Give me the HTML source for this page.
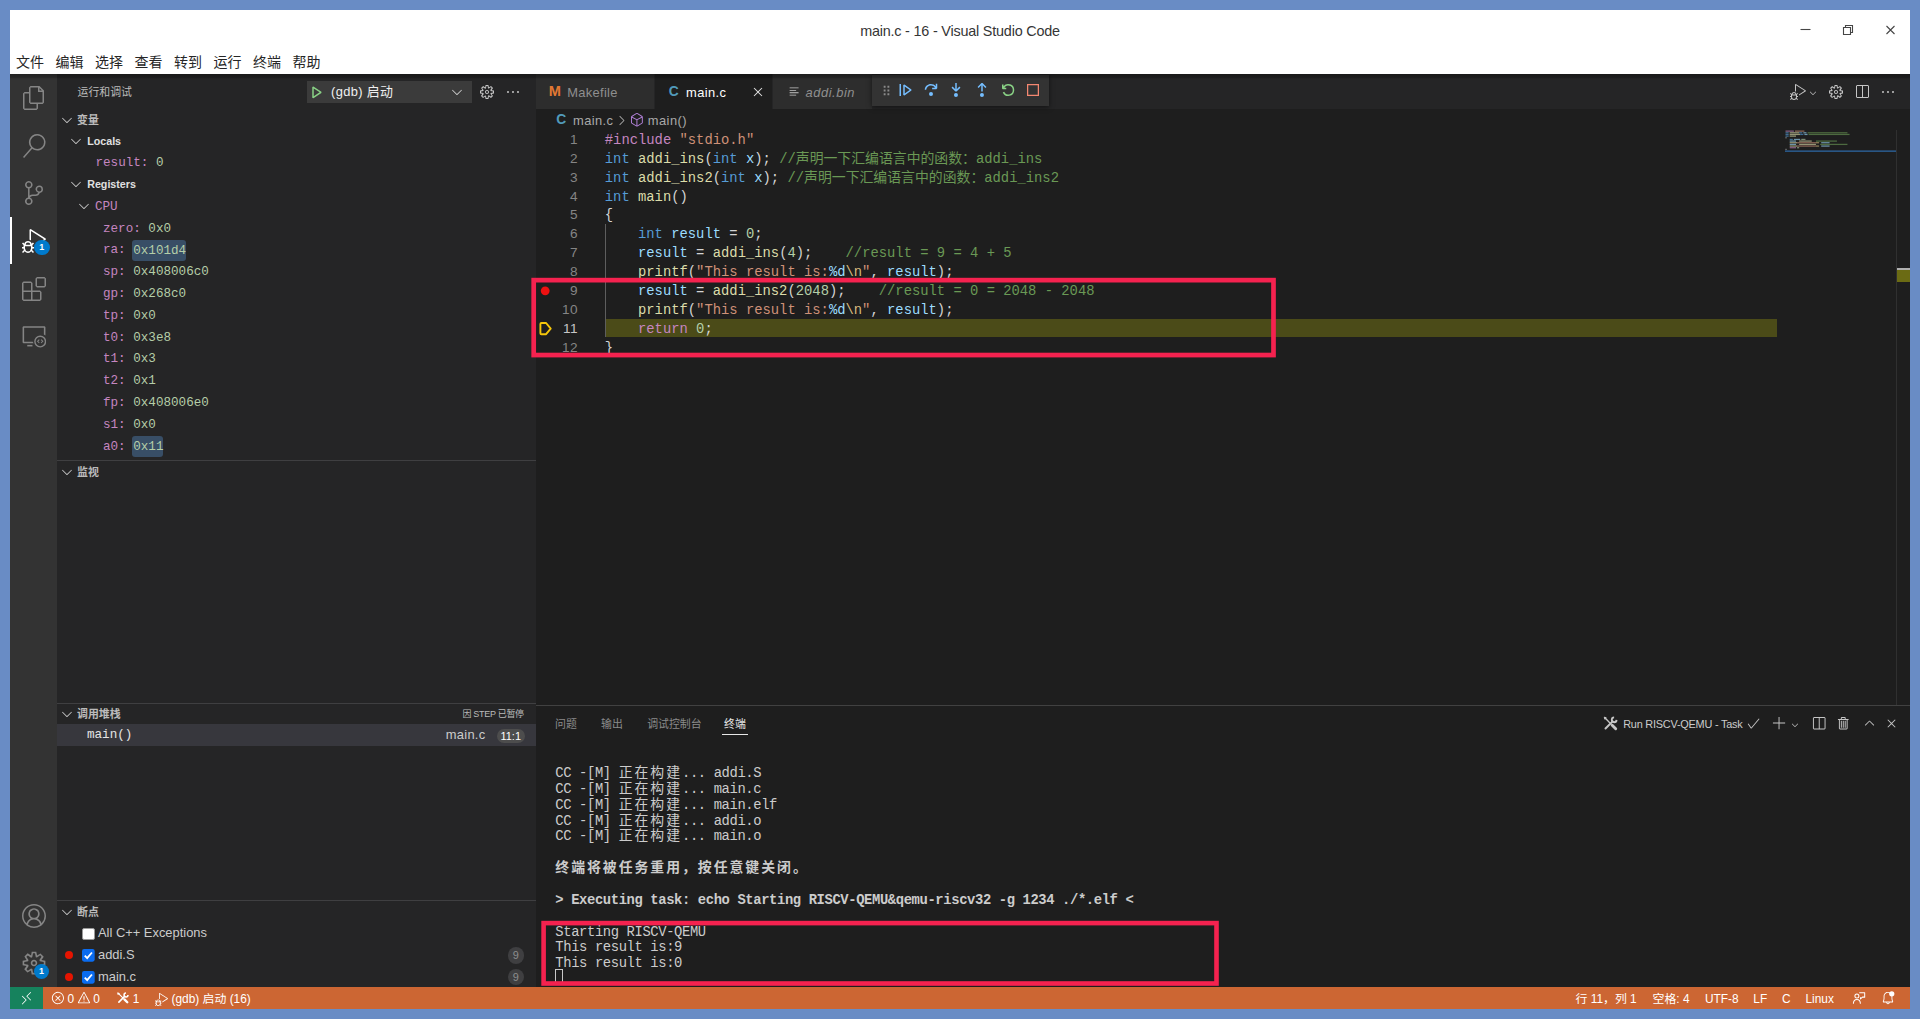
<!DOCTYPE html>
<html lang="zh-CN"><head><meta charset="utf-8"><title>main.c - 16 - Visual Studio Code</title>
<style>
*{box-sizing:border-box;margin:0;padding:0}
html,body{width:1920px;height:1019px;overflow:hidden}
body{background:#698cc5;position:relative;font-family:"Liberation Sans","Noto Sans CJK SC",sans-serif;-webkit-font-smoothing:antialiased}
.b{position:absolute}
.t{position:absolute;white-space:pre;height:24px;line-height:24px}
.u{font-family:"Liberation Sans","Noto Sans CJK SC",sans-serif}
.m{font-family:"Liberation Mono","Noto Sans CJK SC",monospace}
.c{font-family:"Liberation Mono","Noto Sans CJK SC",monospace}
.ic{position:absolute;display:block}
.bold{font-weight:bold}
.k{color:#569cd6}.f{color:#dcdcaa}.v{color:#9cdcfe}.p{color:#d4d4d4}.s{color:#ce9178}.cm{color:#6a9955}.n{color:#b5cea8}.r{color:#c586c0}.e{color:#d7ba7d}
.cj{font-family:"Liberation Mono","Noto Sans CJK SC",monospace;line-height:0}
.c .cj{font-size:13.86px;letter-spacing:0}.tm{letter-spacing:-0.38px}.c .cj.tc{letter-spacing:1.98px;font-size:13.86px}
</style></head><body>

<div class="b" style="left:10px;top:10px;width:1900.00px;height:999.00px;background:#ffffff;"></div>
<div class="t u" style="left:660px;width:600px;text-align:center;top:18.5px;font-size:14.4px;letter-spacing:-.2px;color:#353535" id="title">main.c - 16 - Visual Studio Code</div>
<svg class="ic" style="left:1795px;top:20px;width:110px;height:20px" viewBox="0 0 110 20" fill="none" stroke="#454545" stroke-width="1.1"><path d="M5.500 9.500h10"/><path d="M48.500 7.500h7v7h-7zM50.500 7.500v-2h7v7h-2"/><path d="M91.500 6l8 8M99.500 6l-8 8"/></svg>
<div class="t u" style="left:15.9px;top:50.20px;font-size:14px;color:#262626;">文件</div>
<div class="t u" style="left:55.4px;top:50.20px;font-size:14px;color:#262626;">编辑</div>
<div class="t u" style="left:94.9px;top:50.20px;font-size:14px;color:#262626;">选择</div>
<div class="t u" style="left:134.4px;top:50.20px;font-size:14px;color:#262626;">查看</div>
<div class="t u" style="left:173.9px;top:50.20px;font-size:14px;color:#262626;">转到</div>
<div class="t u" style="left:213.4px;top:50.20px;font-size:14px;color:#262626;">运行</div>
<div class="t u" style="left:252.9px;top:50.20px;font-size:14px;color:#262626;">终端</div>
<div class="t u" style="left:292.4px;top:50.20px;font-size:14px;color:#262626;">帮助</div>
<div class="b" style="left:10px;top:74px;width:47.30px;height:913.00px;background:#333333;"></div>
<div class="b" style="left:57.3px;top:74px;width:478.70px;height:913.00px;background:#252526;"></div>
<div class="b" style="left:536px;top:74px;width:1374.00px;height:913.00px;background:#1e1e1e;"></div>
<div class="b" style="left:10px;top:987px;width:1900.00px;height:22.00px;background:#cc6633;"></div>
<div class="b" style="left:10px;top:987px;width:33.30px;height:22.00px;background:#16825d;"></div>
<svg class="ic" style="left:21.90px;top:85.50px;width:24px;height:24px;color:#858585;" viewBox="0 0 24 24" fill="currentColor"><path d="M17.5 0h-9L7 1.5V6H2.5L1 7.5v15.07L2.5 24h12.07L16 22.57V18h4.7l1.3-1.43V4.5L17.5 0zm0 2.12l2.38 2.38H17.5V2.12zm-3 20.38h-12v-15H7v9.07L8.5 18h6v4.5zm6-6h-12v-15H16V6h4.5v10.5z"/></svg>
<svg class="ic" style="left:21.50px;top:133.50px;width:24px;height:24px;color:#858585;" viewBox="0 0 24 24" fill="currentColor"><path d="M15.25 0a8.25 8.25 0 0 0-6.18 13.72L1 22.88l1.12 1 8.05-9.12A8.251 8.251 0 1 0 15.25.01V0zm0 15a6.75 6.75 0 1 1 0-13.5 6.75 6.75 0 0 1 0 13.5z"/></svg>
<svg class="ic" style="left:21.50px;top:180.50px;width:24px;height:24px;color:#858585;" viewBox="0 0 24 24" fill="currentColor"><path d="M21.007 8.222A3.738 3.738 0 0 0 15.045 5.2a3.737 3.737 0 0 0 1.156 6.583 2.988 2.988 0 0 1-2.668 1.67h-2.99a4.456 4.456 0 0 0-2.989 1.165V7.4a3.737 3.737 0 1 0-1.494 0v9.117a3.776 3.776 0 1 0 1.816.099 2.99 2.99 0 0 1 2.668-1.667h2.99a4.484 4.484 0 0 0 4.223-3.039 3.736 3.736 0 0 0 3.25-3.687zM4.565 3.738a2.242 2.242 0 1 1 4.484 0 2.242 2.242 0 0 1-4.484 0zm4.484 16.441a2.242 2.242 0 1 1-4.484 0 2.242 2.242 0 0 1 4.484 0zm8.221-9.715a2.242 2.242 0 1 1 0-4.485 2.242 2.242 0 0 1 0 4.485z"/></svg>
<div class="b" style="left:10px;top:216.5px;width:2.00px;height:47.50px;background:#ffffff;"></div>
<svg class="ic" style="left:21.50px;top:228.50px;width:24px;height:24px;color:#ffffff;" viewBox="0 0 24 24" fill="currentColor"><path d="M10.94 13.5l-1.32 1.32a3.73 3.73 0 0 0-7.24 0L1.06 13.5 0 14.56l1.72 1.72-.22.22V18H0v1.5h1.5v.08c.077.489.214.966.41 1.42L0 22.94 1.06 24l1.65-1.65A4.308 4.308 0 0 0 6 24a4.31 4.31 0 0 0 3.29-1.65L10.94 24 12 22.94 10.09 21c.198-.464.336-.951.41-1.45v-.1H12V18h-1.5v-1.5l-.22-.22L12 14.56l-1.06-1.06zM6 13.5a2.25 2.25 0 0 1 2.25 2.25h-4.5A2.25 2.25 0 0 1 6 13.5zm3 6a3.33 3.33 0 0 1-3 3 3.33 3.33 0 0 1-3-3v-2.25h6v2.25zm14.76-9.9v1.26L13.5 17.37V15.6l8.5-5.37L9 2v9.46a5.07 5.07 0 0 0-1.5-.72V.63L8.64 0l15.12 9.6z"/></svg>
<svg class="ic" style="left:21.50px;top:276.50px;width:24px;height:24px;color:#858585;" viewBox="0 0 24 24" fill="currentColor"><path d="M13.5 1.5L15 0h7.5L24 1.5V9l-1.5 1.5H15L13.5 9V1.5zm1.5 0V9h7.5V1.5H15zM0 15V6l1.5-1.5H9L10.5 6v7.5H18l1.5 1.5v7.5L18 24H1.5L0 22.5V15zm9-1.5V6H1.5v7.5H9zM9 15H1.5v7.5H9V15zm1.5 7.5H18V15h-7.5v7.5z"/></svg>
<svg class="ic" style="left:21.50px;top:323.80px;width:24px;height:24px;color:#858585;" viewBox="0 0 24 24" fill="currentColor"><path d="M1.344 2.125h21.312l.782.781v8.599a7.825 7.825 0 0 0-1.563-.912V3.688H2.125V17.75h8.599a7.8 7.8 0 0 0 .912 1.563H1.344l-.781-.782V2.906l.78-.781z"/><path d="M5.25 20.875h5.2v1.563H5.25z"/><path fill-rule="evenodd" d="M18.2 11.6a6 6 0 1 0 0 12 6 6 0 0 0 0-12zm-4.6 6a4.6 4.6 0 1 1 9.2 0 4.6 4.6 0 0 1-9.2 0z"/><path d="M17.3 15.2l.7.7-1.4 1.4 1.4 1.4-.7.7-2.1-2.1zM19.1 15.9l.7-.7 2.1 2.1-2.1 2.1-.7-.7 1.4-1.4z" transform="translate(0 .3) scale(.98)"/></svg>
<svg class="ic" style="left:21.50px;top:904.00px;width:24px;height:24px;color:#858585;" viewBox="0 0 16 16" fill="currentColor"><path d="M16 7.992C16 3.58 12.416 0 8 0S0 3.58 0 7.992c0 2.43 1.104 4.62 2.832 6.09.016.016.032.016.032.032.144.112.288.224.448.336.08.048.144.111.224.175A7.98 7.98 0 0 0 8.016 16a7.98 7.98 0 0 0 4.48-1.375c.08-.048.144-.111.224-.16.144-.111.304-.223.448-.335.016-.016.032-.016.032-.032 1.696-1.487 2.8-3.676 2.8-6.106zm-8 7.001c-1.504 0-2.88-.48-4.016-1.279.016-.128.048-.255.08-.383a4.17 4.17 0 0 1 .416-.991c.176-.304.384-.576.64-.816.24-.24.528-.463.816-.639.304-.176.624-.304.976-.4A4.15 4.15 0 0 1 8 10.342a4.185 4.185 0 0 1 2.928 1.166c.368.368.656.8.864 1.295.112.288.192.592.24.911A7.03 7.03 0 0 1 8 14.993zm-2.448-7.4a2.49 2.49 0 0 1-.208-1.024c0-.351.064-.703.208-1.023.144-.32.336-.607.576-.847.24-.24.528-.431.848-.575.32-.144.672-.208 1.024-.208.368 0 .704.064 1.024.208.32.144.608.336.848.575.24.24.432.528.576.847.144.32.208.672.208 1.023 0 .368-.064.704-.208 1.023a2.84 2.84 0 0 1-.576.848 2.84 2.84 0 0 1-.848.575 2.715 2.715 0 0 1-2.064 0 2.84 2.84 0 0 1-.848-.575 2.526 2.526 0 0 1-.56-.848zm7.424 5.306c0-.032-.016-.048-.016-.08a5.22 5.22 0 0 0-.688-1.406 4.883 4.883 0 0 0-1.088-1.135 5.207 5.207 0 0 0-1.04-.608 2.82 2.82 0 0 0 .464-.383 4.2 4.2 0 0 0 .624-.784 3.624 3.624 0 0 0 .528-1.934 3.71 3.71 0 0 0-.288-1.47 3.799 3.799 0 0 0-.816-1.199 3.845 3.845 0 0 0-1.2-.8 3.72 3.72 0 0 0-1.472-.287 3.72 3.72 0 0 0-1.472.288 3.631 3.631 0 0 0-1.2.815 3.84 3.84 0 0 0-.8 1.199 3.71 3.71 0 0 0-.288 1.47c0 .352.048.688.144 1.007.096.336.224.64.4.927.16.288.384.544.624.784.144.144.304.271.48.383a5.12 5.12 0 0 0-1.04.624c-.416.32-.784.703-1.088 1.119a4.999 4.999 0 0 0-.688 1.406c-.016.032-.016.064-.016.08C1.776 11.636.992 9.91.992 7.992.992 4.14 4.144.991 8 .991s7.008 3.149 7.008 7.001a6.96 6.96 0 0 1-2.032 4.907z"/></svg>
<svg class="ic" style="left:20.50px;top:950.00px;width:26px;height:26px;color:#858585;" viewBox="0 0 16 16" fill="currentColor"><path d="M9.1 4.4L8.6 2H7.4l-.5 2.4-.7.3-2-1.3-.9.8 1.3 2-.2.7-2.4.5v1.2l2.4.5.3.8-1.3 2 .8.8 2-1.3.8.3.4 2.3h1.2l.5-2.4.8-.3 2 1.3.8-.8-1.3-2 .3-.8 2.3-.4V7.4l-2.4-.5-.3-.8 1.3-2-.8-.8-2 1.3-.7-.2zM9.4 1l.5 2.4L12 2.1l2 2-1.4 2.1 2.4.4v2.8l-2.4.5L14 12l-2 2-2.1-1.4-.5 2.4H6.6l-.5-2.4L4 13.9l-2-2 1.4-2.1L1 9.4V6.6l2.4-.5L2.1 4l2-2 2.1 1.4.4-2.4h2.8zm.6 7c0 1.1-.9 2-2 2s-2-.9-2-2 .9-2 2-2 2 .9 2 2zM8 9c.6 0 1-.4 1-1s-.4-1-1-1-1 .4-1 1 .4 1 1 1z"/></svg>
<div class="b u bold" style="left:34.05px;top:239.85px;width:15.5px;height:15.5px;border-radius:50%;background:#007acc;color:#fff;font-size:9px;line-height:15.5px;text-align:center">1</div>
<div class="b u bold" style="left:33.75px;top:963.85px;width:15.5px;height:15.5px;border-radius:50%;background:#007acc;color:#fff;font-size:9px;line-height:15.5px;text-align:center">1</div>
<div class="t u" style="left:77.5px;top:80.00px;font-size:10.9px;color:#bbbbbb;">运行和调试</div>
<div class="b" style="left:307px;top:81px;width:165.20px;height:21.60px;background:#3b3b3b;"></div>
<svg class="ic" style="left:308.20px;top:84.40px;width:16px;height:16px;color:#89d185;" viewBox="0 0 16 16" fill="currentColor"><path d="M4.25 3l1.166-.624 8 5.333v1.248l-8 5.334-1.166-.624V3zm1.5 1.401v7.864l5.898-3.932L5.75 4.401z"/></svg>
<div class="t u" style="left:331px;top:80.40px;font-size:12.9px;color:#f0f0f0;letter-spacing:.35px">(gdb) 启动</div>
<svg class="ic" style="left:449.20px;top:84.30px;width:16px;height:16px;color:#cccccc;" viewBox="0 0 16 16" fill="currentColor"><path d="M7.976 10.072l4.357-4.357.62.618L8.284 11h-.618L3 6.333l.619-.618 4.357 4.357z"/></svg>
<svg class="ic" style="left:479.00px;top:84.00px;width:16px;height:16px;color:#c5c5c5;" viewBox="0 0 16 16" fill="currentColor"><path d="M9.1 4.4L8.6 2H7.4l-.5 2.4-.7.3-2-1.3-.9.8 1.3 2-.2.7-2.4.5v1.2l2.4.5.3.8-1.3 2 .8.8 2-1.3.8.3.4 2.3h1.2l.5-2.4.8-.3 2 1.3.8-.8-1.3-2 .3-.8 2.3-.4V7.4l-2.4-.5-.3-.8 1.3-2-.8-.8-2 1.3-.7-.2zM9.4 1l.5 2.4L12 2.1l2 2-1.4 2.1 2.4.4v2.8l-2.4.5L14 12l-2 2-2.1-1.4-.5 2.4H6.6l-.5-2.4L4 13.9l-2-2 1.4-2.1L1 9.4V6.6l2.4-.5L2.1 4l2-2 2.1 1.4.4-2.4h2.8zm.6 7c0 1.1-.9 2-2 2s-2-.9-2-2 .9-2 2-2 2 .9 2 2zM8 9c.6 0 1-.4 1-1s-.4-1-1-1-1 .4-1 1 .4 1 1 1z"/></svg>
<svg class="ic" style="left:504.60px;top:84.00px;width:16px;height:16px;color:#c5c5c5;" viewBox="0 0 16 16" fill="currentColor"><path d="M4 8a1 1 0 1 1-2 0 1 1 0 0 1 2 0zm5 0a1 1 0 1 1-2 0 1 1 0 0 1 2 0zm5 0a1 1 0 1 1-2 0 1 1 0 0 1 2 0z"/></svg>
<svg class="ic" style="left:59.00px;top:111.50px;width:16px;height:16px;color:#c5c5c5;" viewBox="0 0 16 16" fill="currentColor"><path d="M7.976 10.072l4.357-4.357.62.618L8.284 11h-.618L3 6.333l.619-.618 4.357 4.357z"/></svg>
<div class="t u bold" style="left:77px;top:107.50px;font-size:10.9px;color:#bbbbbb;">变量</div>
<svg class="ic" style="left:68.00px;top:132.50px;width:16px;height:16px;color:#c5c5c5;" viewBox="0 0 16 16" fill="currentColor"><path d="M7.976 10.072l4.357-4.357.62.618L8.284 11h-.618L3 6.333l.619-.618 4.357 4.357z"/></svg>
<div class="t u bold" style="left:87.2px;top:128.80px;font-size:10.7px;color:#e0e0e0;">Locals</div>
<div class="t m" style="left:95.5px;top:151.20px;font-size:12.6px;color:#ccc;"><span style="color:#c586c0">result:</span> <span style="color:#b5cea8">0</span></div>
<svg class="ic" style="left:68.00px;top:176.10px;width:16px;height:16px;color:#c5c5c5;" viewBox="0 0 16 16" fill="currentColor"><path d="M7.976 10.072l4.357-4.357.62.618L8.284 11h-.618L3 6.333l.619-.618 4.357 4.357z"/></svg>
<div class="t u bold" style="left:87.2px;top:172.40px;font-size:10.7px;color:#e0e0e0;">Registers</div>
<svg class="ic" style="left:75.50px;top:197.90px;width:16px;height:16px;color:#c5c5c5;" viewBox="0 0 16 16" fill="currentColor"><path d="M7.976 10.072l4.357-4.357.62.618L8.284 11h-.618L3 6.333l.619-.618 4.357 4.357z"/></svg>
<div class="t m" style="left:95px;top:194.90px;font-size:12.6px;color:#c586c0;">CPU</div>
<div class="t m" style="left:103px;top:216.60px;font-size:12.6px;color:#ccc;"><span style="color:#c586c0">zero:</span> <span style="color:#b5cea8">0x0</span></div>
<div class="t m" style="left:103px;top:238.40px;font-size:12.6px;color:#ccc;"><span style="color:#c586c0">ra:</span> <span style="color:#b5cea8;background:#384e66;border-radius:3px;padding:3.5px 0 3.5px 1.5px;margin-left:-1.5px;">0x101d4</span></div>
<div class="t m" style="left:103px;top:260.20px;font-size:12.6px;color:#ccc;"><span style="color:#c586c0">sp:</span> <span style="color:#b5cea8">0x408006c0</span></div>
<div class="t m" style="left:103px;top:282.00px;font-size:12.6px;color:#ccc;"><span style="color:#c586c0">gp:</span> <span style="color:#b5cea8">0x268c0</span></div>
<div class="t m" style="left:103px;top:303.80px;font-size:12.6px;color:#ccc;"><span style="color:#c586c0">tp:</span> <span style="color:#b5cea8">0x0</span></div>
<div class="t m" style="left:103px;top:325.60px;font-size:12.6px;color:#ccc;"><span style="color:#c586c0">t0:</span> <span style="color:#b5cea8">0x3e8</span></div>
<div class="t m" style="left:103px;top:347.40px;font-size:12.6px;color:#ccc;"><span style="color:#c586c0">t1:</span> <span style="color:#b5cea8">0x3</span></div>
<div class="t m" style="left:103px;top:369.20px;font-size:12.6px;color:#ccc;"><span style="color:#c586c0">t2:</span> <span style="color:#b5cea8">0x1</span></div>
<div class="t m" style="left:103px;top:391.00px;font-size:12.6px;color:#ccc;"><span style="color:#c586c0">fp:</span> <span style="color:#b5cea8">0x408006e0</span></div>
<div class="t m" style="left:103px;top:412.80px;font-size:12.6px;color:#ccc;"><span style="color:#c586c0">s1:</span> <span style="color:#b5cea8">0x0</span></div>
<div class="t m" style="left:103px;top:434.60px;font-size:12.6px;color:#ccc;"><span style="color:#c586c0">a0:</span> <span style="color:#b5cea8;background:#384e66;border-radius:3px;padding:3.5px 0 3.5px 1.5px;margin-left:-1.5px;">0x11</span></div>
<div class="b" style="left:57.3px;top:460px;width:478.70px;height:1.00px;background:#3f3f41;"></div>
<svg class="ic" style="left:59.00px;top:463.70px;width:16px;height:16px;color:#c5c5c5;" viewBox="0 0 16 16" fill="currentColor"><path d="M7.976 10.072l4.357-4.357.62.618L8.284 11h-.618L3 6.333l.619-.618 4.357 4.357z"/></svg>
<div class="t u bold" style="left:77px;top:459.70px;font-size:10.9px;color:#bbbbbb;">监视</div>
<div class="b" style="left:57.3px;top:702.5px;width:478.70px;height:1.00px;background:#3f3f41;"></div>
<svg class="ic" style="left:59.00px;top:706.00px;width:16px;height:16px;color:#c5c5c5;" viewBox="0 0 16 16" fill="currentColor"><path d="M7.976 10.072l4.357-4.357.62.618L8.284 11h-.618L3 6.333l.619-.618 4.357 4.357z"/></svg>
<div class="t u bold" style="left:77px;top:702.00px;font-size:10.9px;color:#bbbbbb;">调用堆栈</div>
<div class="t u" style="right:1396.2px;top:702.00px;font-size:9.0px;color:#bbbbbb;letter-spacing:-.3px">因 STEP 已暂停</div>
<div class="b" style="left:57.3px;top:724px;width:478.70px;height:22.00px;background:#37373d;"></div>
<div class="t m" style="left:87px;top:722.80px;font-size:12.6px;color:#e4e4e4;">main()</div>
<div class="t u" style="right:1434.5px;top:723.30px;font-size:12.9px;color:#cccccc;letter-spacing:.3px">main.c</div>
<div class="b u" style="left:496.5px;top:728.5px;width:28.5px;height:14.5px;border-radius:8px;background:#4d4d4d;color:#fff;font-size:10.9px;line-height:14.5px;text-align:center">11:1</div>
<div class="b" style="left:57.3px;top:900px;width:478.70px;height:1.00px;background:#3f3f41;"></div>
<svg class="ic" style="left:59.00px;top:903.70px;width:16px;height:16px;color:#c5c5c5;" viewBox="0 0 16 16" fill="currentColor"><path d="M7.976 10.072l4.357-4.357.62.618L8.284 11h-.618L3 6.333l.619-.618 4.357 4.357z"/></svg>
<div class="t u bold" style="left:77px;top:899.70px;font-size:10.9px;color:#bbbbbb;">断点</div>
<div class="b" style="left:82.2px;top:927.5px;width:12.7px;height:12.7px;border-radius:2px;background:#fff;border:1px solid #9a9a9a"></div>
<div class="t u" style="left:98px;top:921.30px;font-size:12.9px;color:#cccccc;">All C++ Exceptions</div>
<div class="b" style="left:65px;top:950.8px;width:8.4px;height:8.4px;border-radius:50%;background:#e51400"></div>
<svg class="ic" style="left:82.2px;top:949.3px;width:12.7px;height:12.7px" viewBox="0 0 12 12"><rect width="12" height="12" rx="2" fill="#0a6cf0"/><path d="M2.600 6.200l2.300 2.500 4.500-5.400" fill="none" stroke="#fff" stroke-width="1.700"/></svg>
<div class="t u" style="left:98px;top:943.00px;font-size:12.9px;color:#cccccc;">addi.S</div>
<div class="b u" style="left:507.5px;top:947px;width:16.5px;height:16.5px;border-radius:50%;background:#3f3f41;color:#8e8e8e;font-size:10.9px;line-height:16.5px;text-align:center">9</div>
<div class="b" style="left:65px;top:972.5px;width:8.4px;height:8.4px;border-radius:50%;background:#e51400"></div>
<svg class="ic" style="left:82.2px;top:971.0px;width:12.7px;height:12.7px" viewBox="0 0 12 12"><rect width="12" height="12" rx="2" fill="#0a6cf0"/><path d="M2.600 6.200l2.300 2.500 4.500-5.400" fill="none" stroke="#fff" stroke-width="1.700"/></svg>
<div class="t u" style="left:98px;top:964.70px;font-size:12.9px;color:#cccccc;">main.c</div>
<div class="b u" style="left:507.5px;top:968.7px;width:16.5px;height:16.5px;border-radius:50%;background:#3f3f41;color:#8e8e8e;font-size:10.9px;line-height:16.5px;text-align:center">9</div>
<div class="b" style="left:536px;top:74px;width:1374.00px;height:35.00px;background:#252526;"></div>
<div class="b" style="left:536px;top:74px;width:118.00px;height:35.00px;background:#2d2d2d;"></div>
<div class="b" style="left:654px;top:74px;width:118.00px;height:35.00px;background:#1e1e1e;"></div>
<div class="b" style="left:772px;top:74px;width:99.50px;height:35.00px;background:#2d2d2d;"></div>
<div class="b" style="left:653.5px;top:74px;width:1.00px;height:35.00px;background:#252526;"></div>
<div class="b" style="left:771.5px;top:74px;width:1.00px;height:35.00px;background:#252526;"></div>
<div class="t u bold" style="left:548.8px;top:79.00px;font-size:14.6px;color:#e37933;">M</div>
<div class="t u" style="left:567.2px;top:80.60px;font-size:12.9px;color:#8f8f8f;letter-spacing:.32px">Makefile</div>
<div class="t u bold" style="left:668.8px;top:79.60px;font-size:13.8px;color:#519aba;">C</div>
<div class="t u" style="left:686px;top:80.60px;font-size:12.9px;color:#ffffff;letter-spacing:.4px">main.c</div>
<svg class="ic" style="left:749.50px;top:84.00px;width:16px;height:16px;color:#e0e0e0;" viewBox="0 0 16 16" fill="currentColor"><path d="M8 8.707l3.646 3.647.708-.707L8.707 8l3.647-3.646-.707-.708L8 7.293 4.354 3.646l-.707.708L7.293 8l-3.646 3.646.707.708L8 8.707z"/></svg>
<svg class="ic" style="left:788.10px;top:84.90px;width:13px;height:13px;color:#c5c5c5;" viewBox="0 0 16 16" fill="currentColor"><path d="M2 3h11v1H2zm0 3h8v1H2zm0 3h11v1H2zm0 3h8v1H2z"/></svg>
<div class="t u" style="left:805.5px;top:80.60px;font-size:12.9px;color:#8f8f8f;font-style:italic;letter-spacing:.55px">addi.bin</div>
<div class="b" style="left:860px;top:74px;width:200px;height:45px;overflow:hidden"><div class="b" style="left:12px;top:.5px;width:177px;height:31.5px;background:#333333;box-shadow:0 1px 5px rgba(0,0,0,.55)"></div></div>
<svg class="ic" style="left:878.80px;top:82.50px;width:15px;height:15px;color:#8a8a8a;" viewBox="0 0 16 16" fill="currentColor"><path d="M5 3h2v2H5zm0 4h2v2H5zm0 4h2v2H5zm4-8h2v2H9zm0 4h2v2H9zm0 4h2v2H9z"/></svg>
<svg class="ic" style="left:897.30px;top:82.00px;width:16px;height:16px;color:#75beff;" viewBox="0 0 16 16" fill="currentColor"><path d="M2.5 2H4v12H2.5V2zm4.936.39L6.25 3v10l1.186.61 7-5V7.39l-7-5zM12.71 8l-4.96 3.54V4.46L12.71 8z"/></svg>
<svg class="ic" style="left:923.10px;top:82.00px;width:16px;height:16px;color:#75beff;" viewBox="0 0 16 16" fill="currentColor"><path d="M14.25 5.75v-4h-1.5v2.542c-1.145-1.359-2.911-2.209-4.84-2.209-3.177 0-5.92 2.307-6.16 5.398l-.02.269h1.501l.022-.226c.212-2.195 2.202-3.94 4.656-3.94 1.736 0 3.244.875 4.05 2.166h-2.83v1.5h4.163l.962-.975V5.75h-.004zM8 14a2 2 0 1 1 0-4 2 2 0 0 1 0 4z"/></svg>
<svg class="ic" style="left:948.00px;top:82.00px;width:16px;height:16px;color:#75beff;" viewBox="0 0 16 16" fill="currentColor"><path d="M8 9.532h.542l3.905-3.905-1.061-1.06-2.637 2.61V1H7.251v6.177l-2.637-2.61-1.061 1.06 3.905 3.905H8zm1.956 3.481a2 2 0 1 1-4 0 2 2 0 0 1 4 0z"/></svg>
<svg class="ic" style="left:973.90px;top:82.00px;width:16px;height:16px;color:#75beff;" viewBox="0 0 16 16" fill="currentColor"><path d="M8 1h-.542L3.553 4.905l1.061 1.06 2.637-2.61v6.177h1.498V3.355l2.637 2.61 1.061-1.06L8.542 1H8zm1.956 12.013a2 2 0 1 1-4 0 2 2 0 0 1 4 0z"/></svg>
<svg class="ic" style="left:1000.40px;top:82.00px;width:16px;height:16px;color:#89d185;" viewBox="0 0 16 16" fill="currentColor"><path d="M12.75 8a4.5 4.5 0 0 1-8.61 1.834l-1.391.565A6.001 6.001 0 0 0 14.25 8 6 6 0 0 0 3.5 4.334V2.5H2v4l.75.75h3.5v-1.5H4.352A4.5 4.5 0 0 1 12.75 8z"/></svg>
<svg class="ic" style="left:1025.40px;top:82.00px;width:16px;height:16px;color:#f48771;" viewBox="0 0 16 16" fill="currentColor"><path d="M2 2v12h12V2H2zm10.75 10.75h-9.5v-9.5h9.5v9.5z"/></svg>
<svg class="ic" style="left:1789.50px;top:84.00px;width:16px;height:16px;color:#c5c5c5;" viewBox="0 0 24 24" fill="currentColor"><path d="M10.94 13.5l-1.32 1.32a3.73 3.73 0 0 0-7.24 0L1.06 13.5 0 14.56l1.72 1.72-.22.22V18H0v1.5h1.5v.08c.077.489.214.966.41 1.42L0 22.94 1.06 24l1.65-1.65A4.308 4.308 0 0 0 6 24a4.31 4.31 0 0 0 3.29-1.65L10.94 24 12 22.94 10.09 21c.198-.464.336-.951.41-1.45v-.1H12V18h-1.5v-1.5l-.22-.22L12 14.56l-1.06-1.06zM6 13.5a2.25 2.25 0 0 1 2.25 2.25h-4.5A2.25 2.25 0 0 1 6 13.5zm3 6a3.33 3.33 0 0 1-3 3 3.33 3.33 0 0 1-3-3v-2.25h6v2.25zm14.76-9.9v1.26L13.5 17.37V15.6l8.5-5.37L9 2v9.46a5.07 5.07 0 0 0-1.5-.72V.63L8.64 0l15.12 9.6z"/></svg>
<svg class="ic" style="left:1808.00px;top:88.00px;width:10px;height:10px;color:#c5c5c5;" viewBox="0 0 16 16" fill="currentColor"><path d="M7.976 10.072l4.357-4.357.62.618L8.284 11h-.618L3 6.333l.619-.618 4.357 4.357z"/></svg>
<svg class="ic" style="left:1827.70px;top:83.50px;width:16px;height:16px;color:#c5c5c5;" viewBox="0 0 16 16" fill="currentColor"><path d="M9.1 4.4L8.6 2H7.4l-.5 2.4-.7.3-2-1.3-.9.8 1.3 2-.2.7-2.4.5v1.2l2.4.5.3.8-1.3 2 .8.8 2-1.3.8.3.4 2.3h1.2l.5-2.4.8-.3 2 1.3.8-.8-1.3-2 .3-.8 2.3-.4V7.4l-2.4-.5-.3-.8 1.3-2-.8-.8-2 1.3-.7-.2zM9.4 1l.5 2.4L12 2.1l2 2-1.4 2.1 2.4.4v2.8l-2.4.5L14 12l-2 2-2.1-1.4-.5 2.4H6.6l-.5-2.4L4 13.9l-2-2 1.4-2.1L1 9.4V6.6l2.4-.5L2.1 4l2-2 2.1 1.4.4-2.4h2.8zm.6 7c0 1.1-.9 2-2 2s-2-.9-2-2 .9-2 2-2 2 .9 2 2zM8 9c.6 0 1-.4 1-1s-.4-1-1-1-1 .4-1 1 .4 1 1 1z"/></svg>
<svg class="ic" style="left:1853.80px;top:83.50px;width:16px;height:16px;color:#c5c5c5;" viewBox="0 0 16 16" fill="currentColor"><path d="M14 1H3L2 2v11l1 1h11l1-1V2l-1-1zM8 13H3V2h5v11zm6 0H9V2h5v11z"/></svg>
<svg class="ic" style="left:1880.00px;top:83.50px;width:16px;height:16px;color:#c5c5c5;" viewBox="0 0 16 16" fill="currentColor"><path d="M4 8a1 1 0 1 1-2 0 1 1 0 0 1 2 0zm5 0a1 1 0 1 1-2 0 1 1 0 0 1 2 0zm5 0a1 1 0 1 1-2 0 1 1 0 0 1 2 0z"/></svg>
<div class="t u bold" style="left:556.3px;top:107.80px;font-size:13.8px;color:#519aba;">C</div>
<div class="t u" style="left:573px;top:108.70px;font-size:12.9px;color:#a9a9a9;letter-spacing:.4px">main.c</div>
<svg class="ic" style="left:614.30px;top:113.00px;width:15px;height:15px;color:#a9a9a9;" viewBox="0 0 16 16" fill="currentColor"><path d="M10.072 8.024L5.715 3.667l.618-.62L11 7.716v.618L6.333 13l-.618-.619 4.357-4.357z"/></svg>
<svg class="ic" style="left:629.30px;top:112.10px;width:15.8px;height:15.8px;color:#b180d7;" viewBox="0 0 16 16" fill="currentColor"><path d="M13.51 4l-5-3h-1l-5 3-.49.86v6l.49.85 5 3h1l5-3 .49-.85v-6L13.510 4zm-6 9.560l-4.5-2.700V5.700l4.500 2.450v5.410zM3.270 4.700l4.740-2.840 4.740 2.840-4.740 2.590L3.270 4.700zm9.740 6.160l-4.500 2.700V8.150l4.500-2.450v5.160z"/></svg>
<div class="t u" style="left:647.8px;top:108.70px;font-size:12.9px;color:#a9a9a9;letter-spacing:.45px">main()</div>
<div class="b" style="left:605px;top:319px;width:1172.30px;height:18.00px;background:#4b4b18;"></div>
<div class="b" style="left:605px;top:224px;width:1.00px;height:113.00px;background:#5e5e5e;"></div>
<div class="t u" style="right:1342.4px;top:127.94px;font-size:13.6px;color:#858585;letter-spacing:.55px;margin-right:-.55px;">1</div>
<div class="t c" style="left:604.8px;top:127.94px;font-size:13.83px;color:#d4d4d4;letter-spacing:0px;"><span class="r">#include</span> <span class="s">"stdio.h"</span></div>
<div class="t u" style="right:1342.4px;top:146.81px;font-size:13.6px;color:#858585;letter-spacing:.55px;margin-right:-.55px;">2</div>
<div class="t c" style="left:604.8px;top:146.81px;font-size:13.83px;color:#d4d4d4;letter-spacing:0px;"><span class="k">int</span> <span class="f">addi_ins</span><span class="p">(</span><span class="k">int</span> <span class="v">x</span><span class="p">);</span> <span class="cm">//<span class="cj">声明一下汇编语言中的函数：</span>addi_ins</span></div>
<div class="t u" style="right:1342.4px;top:165.68px;font-size:13.6px;color:#858585;letter-spacing:.55px;margin-right:-.55px;">3</div>
<div class="t c" style="left:604.8px;top:165.68px;font-size:13.83px;color:#d4d4d4;letter-spacing:0px;"><span class="k">int</span> <span class="f">addi_ins2</span><span class="p">(</span><span class="k">int</span> <span class="v">x</span><span class="p">);</span> <span class="cm">//<span class="cj">声明一下汇编语言中的函数：</span>addi_ins2</span></div>
<div class="t u" style="right:1342.4px;top:184.55px;font-size:13.6px;color:#858585;letter-spacing:.55px;margin-right:-.55px;">4</div>
<div class="t c" style="left:604.8px;top:184.55px;font-size:13.83px;color:#d4d4d4;letter-spacing:0px;"><span class="k">int</span> <span class="f">main</span><span class="p">()</span></div>
<div class="t u" style="right:1342.4px;top:203.42px;font-size:13.6px;color:#858585;letter-spacing:.55px;margin-right:-.55px;">5</div>
<div class="t c" style="left:604.8px;top:203.42px;font-size:13.83px;color:#d4d4d4;letter-spacing:0px;"><span class="p">{</span></div>
<div class="t u" style="right:1342.4px;top:222.29px;font-size:13.6px;color:#858585;letter-spacing:.55px;margin-right:-.55px;">6</div>
<div class="t c" style="left:604.8px;top:222.29px;font-size:13.83px;color:#d4d4d4;letter-spacing:0px;">    <span class="k">int</span> <span class="v">result</span> <span class="p">=</span> <span class="n">0</span><span class="p">;</span></div>
<div class="t u" style="right:1342.4px;top:241.16px;font-size:13.6px;color:#858585;letter-spacing:.55px;margin-right:-.55px;">7</div>
<div class="t c" style="left:604.8px;top:241.16px;font-size:13.83px;color:#d4d4d4;letter-spacing:0px;">    <span class="v">result</span> <span class="p">=</span> <span class="f">addi_ins</span><span class="p">(</span><span class="n">4</span><span class="p">);</span>    <span class="cm">//result = 9 = 4 + 5</span></div>
<div class="t u" style="right:1342.4px;top:260.03px;font-size:13.6px;color:#858585;letter-spacing:.55px;margin-right:-.55px;">8</div>
<div class="t c" style="left:604.8px;top:260.03px;font-size:13.83px;color:#d4d4d4;letter-spacing:0px;">    <span class="f">printf</span><span class="p">(</span><span class="s">"This result is:</span><span class="v">%d</span><span class="e">\n</span><span class="s">"</span><span class="p">,</span> <span class="v">result</span><span class="p">);</span></div>
<div class="t u" style="right:1342.4px;top:278.90px;font-size:13.6px;color:#858585;letter-spacing:.55px;margin-right:-.55px;">9</div>
<div class="t c" style="left:604.8px;top:278.90px;font-size:13.83px;color:#d4d4d4;letter-spacing:0px;">    <span class="v">result</span> <span class="p">=</span> <span class="f">addi_ins2</span><span class="p">(</span><span class="n">2048</span><span class="p">);</span>    <span class="cm">//result = 0 = 2048 - 2048</span></div>
<div class="t u" style="right:1342.4px;top:297.77px;font-size:13.6px;color:#858585;letter-spacing:.55px;margin-right:-.55px;">10</div>
<div class="t c" style="left:604.8px;top:297.77px;font-size:13.83px;color:#d4d4d4;letter-spacing:0px;">    <span class="f">printf</span><span class="p">(</span><span class="s">"This result is:</span><span class="v">%d</span><span class="e">\n</span><span class="s">"</span><span class="p">,</span> <span class="v">result</span><span class="p">);</span></div>
<div class="t u" style="right:1342.4px;top:316.64px;font-size:13.6px;color:#c6c6c6;letter-spacing:.55px;margin-right:-.55px;">11</div>
<div class="t c" style="left:604.8px;top:316.64px;font-size:13.83px;color:#d4d4d4;letter-spacing:0px;">    <span class="r">return</span> <span class="n">0</span><span class="p">;</span></div>
<div class="t u" style="right:1342.4px;top:335.51px;font-size:13.6px;color:#858585;letter-spacing:.55px;margin-right:-.55px;">12</div>
<div class="t c" style="left:604.8px;top:335.51px;font-size:13.83px;color:#d4d4d4;letter-spacing:0px;"><span class="p">}</span></div>
<svg class="ic" style="left:538px;top:284px;width:14px;height:14px" viewBox="0 0 14 14"><circle cx="7.2" cy="6.8" r="4.4" fill="#ee1111"/></svg>
<svg class="ic" style="left:538px;top:320.500px;width:15px;height:15px" viewBox="0 0 15 15"><path d="M2.400 3.000 a1 1 0 0 1 1-1 h4.700 l4.600 5.600 -4.600 5.600 h-4.700 a1 1 0 0 1 -1-1 z" fill="none" stroke="#f5c60a" stroke-width="1.900" stroke-linejoin="round"/></svg>
<svg class="ic" style="left:1785px;top:130px;width:112px;height:24px" viewBox="0 0 112 24"><g opacity=".62"><rect x="0.50" y="0.50" width="8.40" height="1.25" fill="#c586c0"/><rect x="9.95" y="0.50" width="9.45" height="1.25" fill="#ce9178"/><rect x="0.50" y="2.16" width="3.15" height="1.25" fill="#569cd6"/><rect x="4.70" y="2.16" width="9.45" height="1.25" fill="#dcdcaa"/><rect x="14.15" y="2.16" width="3.15" height="1.25" fill="#569cd6"/><rect x="18.35" y="2.16" width="3.15" height="1.25" fill="#9cdcfe"/><rect x="22.55" y="2.16" width="39.90" height="1.25" fill="#6a9955"/><rect x="0.50" y="3.82" width="3.15" height="1.25" fill="#569cd6"/><rect x="4.70" y="3.82" width="10.50" height="1.25" fill="#dcdcaa"/><rect x="15.20" y="3.82" width="3.15" height="1.25" fill="#569cd6"/><rect x="19.40" y="3.82" width="3.15" height="1.25" fill="#9cdcfe"/><rect x="23.60" y="3.82" width="40.95" height="1.25" fill="#6a9955"/><rect x="0.50" y="5.48" width="3.15" height="1.25" fill="#569cd6"/><rect x="4.70" y="5.48" width="6.30" height="1.25" fill="#dcdcaa"/><rect x="0.50" y="7.14" width="1.05" height="1.25" fill="#d4d4d4"/><rect x="4.70" y="8.80" width="3.15" height="1.25" fill="#569cd6"/><rect x="8.90" y="8.80" width="6.30" height="1.25" fill="#9cdcfe"/><rect x="16.25" y="8.80" width="4.20" height="1.25" fill="#b5cea8"/><rect x="4.70" y="10.46" width="6.30" height="1.25" fill="#9cdcfe"/><rect x="14.15" y="10.46" width="12.60" height="1.25" fill="#dcdcaa"/><rect x="30.95" y="10.46" width="21.00" height="1.25" fill="#6a9955"/><rect x="4.70" y="12.12" width="7.35" height="1.25" fill="#dcdcaa"/><rect x="12.05" y="12.12" width="18.90" height="1.25" fill="#ce9178"/><rect x="30.95" y="12.12" width="3.15" height="1.25" fill="#d7ba7d"/><rect x="36.20" y="12.12" width="8.40" height="1.25" fill="#9cdcfe"/><rect x="4.70" y="13.78" width="6.30" height="1.25" fill="#9cdcfe"/><rect x="14.15" y="13.78" width="16.80" height="1.25" fill="#dcdcaa"/><rect x="35.15" y="13.78" width="27.30" height="1.25" fill="#6a9955"/><rect x="4.70" y="15.44" width="7.35" height="1.25" fill="#dcdcaa"/><rect x="12.05" y="15.44" width="18.90" height="1.25" fill="#ce9178"/><rect x="30.95" y="15.44" width="3.15" height="1.25" fill="#d7ba7d"/><rect x="36.20" y="15.44" width="8.40" height="1.25" fill="#9cdcfe"/><rect x="4.70" y="17.10" width="6.30" height="1.25" fill="#c586c0"/><rect x="12.05" y="17.10" width="2.10" height="1.25" fill="#b5cea8"/><rect x="0.50" y="18.76" width="1.05" height="1.25" fill="#d4d4d4"/></g><rect x="0" y="20.400" width="111" height="1.500" fill="#2b5c90"/></svg>
<div class="b" style="left:1896px;top:130px;width:1.00px;height:575.00px;background:#303030;"></div>
<div class="b" style="left:1897px;top:268.5px;width:13.00px;height:13.00px;background:#6b6b14;"></div>
<div class="b" style="left:1897px;top:268px;width:13.00px;height:1.50px;background:#b0b0b0;"></div>
<div class="b" style="left:536px;top:705px;width:1374.00px;height:1.00px;background:#414141;"></div>
<div class="t u" style="left:555px;top:712.00px;font-size:10.9px;color:#8b8b8b;">问题</div>
<div class="t u" style="left:601px;top:712.00px;font-size:10.9px;color:#8b8b8b;">输出</div>
<div class="t u" style="left:647.2px;top:712.00px;font-size:10.9px;color:#8b8b8b;">调试控制台</div>
<div class="t u" style="left:724px;top:712.00px;font-size:10.9px;color:#e7e7e7;">终端</div>
<div class="b" style="left:722.2px;top:734px;width:26.10px;height:1.00px;background:#e7e7e7;"></div>
<svg class="ic" style="left:1602.30px;top:715.30px;width:17px;height:17px;color:#c5c5c5;" viewBox="0 0 16 16" fill="currentColor"><g fill="none" stroke="currentColor" stroke-linecap="round"><path d="M3.300 12.700L10 6" stroke-width="1.900"/><path d="M13.700 4.600A2.250 2.250 0 1 1 11.400 2.300" stroke-width="1.700" stroke-linecap="butt"/><path d="M2.900 2.900l5.300 5.300" stroke-width="1.300"/><path d="M2.200 2.200l1.600.500-1.100 1.100z" stroke-width="1" stroke-linejoin="round" fill="currentColor"/><path d="M9.600 9.600l3.300 3.300" stroke-width="2.700"/></g></svg>
<div class="t u" style="left:1623.2px;top:711.80px;font-size:10.9px;color:#cccccc;letter-spacing:-.22px">Run RISCV-QEMU - Task</div>
<svg class="ic" style="left:1745.80px;top:716.00px;width:15px;height:15px;color:#c5c5c5;" viewBox="0 0 16 16" fill="currentColor"><path d="M14.431 3.323l-8.47 10-.79-.036-3.35-4.77.818-.574 2.978 4.24 8.051-9.506.764.646z"/></svg>
<svg class="ic" style="left:1771.50px;top:716.00px;width:15px;height:15px;color:#c5c5c5;" viewBox="0 0 16 16" fill="currentColor"><path d="M14 7v1H8v6H7V8H1V7h6V1h1v6h6z"/></svg>
<svg class="ic" style="left:1790.00px;top:720.00px;width:10px;height:10px;color:#c5c5c5;" viewBox="0 0 16 16" fill="currentColor"><path d="M7.976 10.072l4.357-4.357.62.618L8.284 11h-.618L3 6.333l.619-.618 4.357 4.357z"/></svg>
<svg class="ic" style="left:1810.55px;top:715.75px;width:15.5px;height:15.5px;color:#c5c5c5;" viewBox="0 0 16 16" fill="currentColor"><path d="M14 1H3L2 2v11l1 1h11l1-1V2l-1-1zM8 13H3V2h5v11zm6 0H9V2h5v11z"/></svg>
<svg class="ic" style="left:1835.55px;top:715.75px;width:15.5px;height:15.5px;color:#c5c5c5;" viewBox="0 0 16 16" fill="currentColor"><path d="M10 3h3v1h-1v9l-1 1H4l-1-1V4H2V3h3V2a1 1 0 0 1 1-1h3a1 1 0 0 1 1 1v1zM9 2H6v1h3V2zM4 13h7V4H4v9zm2-8H5v7h1V5zm1 0h1v7H7V5zm2 0h1v7H9V5z"/></svg>
<svg class="ic" style="left:1861.80px;top:716.00px;width:15px;height:15px;color:#c5c5c5;" viewBox="0 0 16 16" fill="currentColor"><path d="M8.024 5.928l-4.357 4.357-.62-.618L7.716 5h.618L13 9.667l-.619.618-4.357-4.357z"/></svg>
<svg class="ic" style="left:1883.50px;top:716.00px;width:15px;height:15px;color:#c5c5c5;" viewBox="0 0 16 16" fill="currentColor"><path d="M8 8.707l3.646 3.647.708-.707L8.707 8l3.647-3.646-.707-.708L8 7.293 4.354 3.646l-.707.708L7.293 8l-3.646 3.646.707.708L8 8.707z"/></svg>
<div class="t c tm" style="left:555.3px;top:760.90px;font-size:13.83px;color:#cccccc;">CC -[M] <span class="cj tc">正在构建</span>... addi.S</div>
<div class="t c tm" style="left:555.3px;top:776.77px;font-size:13.83px;color:#cccccc;">CC -[M] <span class="cj tc">正在构建</span>... main.c</div>
<div class="t c tm" style="left:555.3px;top:792.64px;font-size:13.83px;color:#cccccc;">CC -[M] <span class="cj tc">正在构建</span>... main.elf</div>
<div class="t c tm" style="left:555.3px;top:808.51px;font-size:13.83px;color:#cccccc;">CC -[M] <span class="cj tc">正在构建</span>... addi.o</div>
<div class="t c tm" style="left:555.3px;top:824.38px;font-size:13.83px;color:#cccccc;">CC -[M] <span class="cj tc">正在构建</span>... main.o</div>
<div class="t c tm" style="left:555.3px;top:856.12px;font-size:13.83px;color:#cccccc;"><b><span class="cj tc">终端将被任务重用，按任意键关闭。</span></b></div>
<div class="t c tm" style="left:555.3px;top:887.86px;font-size:13.83px;color:#cccccc;"><b>&gt; Executing task: echo Starting RISCV-QEMU&amp;qemu-riscv32 -g 1234 ./*.elf &lt;</b></div>
<div class="t c tm" style="left:555.3px;top:919.60px;font-size:13.83px;color:#cccccc;">Starting RISCV-QEMU</div>
<div class="t c tm" style="left:555.3px;top:935.47px;font-size:13.83px;color:#cccccc;">This result is:9</div>
<div class="t c tm" style="left:555.3px;top:951.34px;font-size:13.83px;color:#cccccc;">This result is:0</div>
<div class="b" style="left:555.2px;top:969.4px;width:8px;height:14px;border:1px solid #c8c8c8"></div>
<div class="b" style="left:10px;top:74px;width:1900.00px;height:5.00px;background:linear-gradient(rgba(0,0,0,.32) 0,rgba(0,0,0,.24) 65%,rgba(0,0,0,0) 100%);"></div>
<svg class="ic" style="left:525px;top:272px;width:760px;height:92px" viewBox="525 272 760 92"><rect x="533.7" y="280.15" width="739.8" height="74.9" fill="none" stroke="#f5224f" stroke-width="4.7"/></svg>
<svg class="ic" style="left:535px;top:915px;width:690px;height:76px" viewBox="535 915 690 76"><rect x="543.6" y="923.1" width="672.9" height="60.4" fill="none" stroke="#f5224f" stroke-width="4.6"/></svg>
<svg class="ic" style="left:19.20px;top:990.50px;width:15px;height:15px;color:#ffffff;" viewBox="0 0 16 16" fill="currentColor"><path d="M12.904 9.57L8.928 5.596l3.976-3.976-.619-.62L8 5.286v.619l4.285 4.285.619-.62zM3 5.62l4.072 4.05L3 13.745l.619.619L8 9.980v-.619L3.619 5 3 5.620z"/></svg>
<svg class="ic" style="left:50.50px;top:991.00px;width:14px;height:14px;color:#ffffff;" viewBox="0 0 16 16" fill="currentColor"><path d="M8.6 1c1.6.1 3.1.9 4.2 2 1.3 1.4 2 3.1 2 5.1 0 1.600-.6 3.100-1.6 4.400-1 1.200-2.400 2.100-4 2.400-1.600.300-3.200.100-4.600-.700-1.400-.800-2.500-2-3.100-3.500C.9 9.200.8 7.500 1.300 6c.5-1.600 1.400-2.900 2.800-3.800C5.400 1.300 7 .9 8.600 1zm.5 12.900c1.300-.300 2.500-1 3.400-2.100.800-1.100 1.300-2.400 1.200-3.800 0-1.600-.600-3.200-1.700-4.300-1-1-2.200-1.600-3.600-1.700-1.300-.100-2.700.200-3.800 1-1.100.800-1.900 1.900-2.300 3.300-.400 1.300-.400 2.700.200 4 .600 1.300 1.500 2.300 2.700 3 1.200.700 2.600.900 3.900.600zM7.900 7.500L10.300 5l.700.700-2.400 2.500 2.400 2.500-.700.700-2.400-2.500-2.400 2.500-.700-.700 2.400-2.500-2.400-2.500.700-.700 2.400 2.500z"/></svg>
<div class="t u" style="left:67.5px;top:986.80px;font-size:11.9px;color:#ffffff;">0</div>
<svg class="ic" style="left:77.00px;top:991.00px;width:14px;height:14px;color:#ffffff;" viewBox="0 0 16 16" fill="currentColor"><path d="M7.56 1h.88l6.54 12.26-.44.74H1.44L1 13.26 7.56 1zM8 2.28L2.28 13H13.7L8 2.280zM8.625 12v-1h-1.25v1h1.250zm-1.25-2V6h1.250v4h-1.25z"/></svg>
<div class="t u" style="left:93.3px;top:986.80px;font-size:11.9px;color:#ffffff;">0</div>
<svg class="ic" style="left:115.50px;top:991.00px;width:14px;height:14px;color:#ffffff;" viewBox="0 0 16 16" fill="currentColor"><g fill="none" stroke="currentColor" stroke-linecap="round"><path d="M3.300 12.700L10 6" stroke-width="1.900"/><path d="M13.700 4.600A2.250 2.250 0 1 1 11.400 2.300" stroke-width="1.700" stroke-linecap="butt"/><path d="M2.900 2.900l5.300 5.300" stroke-width="1.300"/><path d="M2.200 2.200l1.600.500-1.100 1.100z" stroke-width="1" stroke-linejoin="round" fill="currentColor"/><path d="M9.600 9.600l3.300 3.300" stroke-width="2.700"/></g></svg>
<div class="t u" style="left:132.7px;top:986.80px;font-size:11.9px;color:#ffffff;">1</div>
<svg class="ic" style="left:154.80px;top:992.50px;width:13px;height:13px;color:#ffffff;" viewBox="0 0 24 24" fill="currentColor"><path d="M10.94 13.5l-1.32 1.32a3.73 3.73 0 0 0-7.24 0L1.06 13.5 0 14.56l1.72 1.72-.22.22V18H0v1.5h1.5v.08c.077.489.214.966.41 1.42L0 22.94 1.06 24l1.65-1.65A4.308 4.308 0 0 0 6 24a4.31 4.31 0 0 0 3.29-1.65L10.94 24 12 22.94 10.09 21c.198-.464.336-.951.41-1.45v-.1H12V18h-1.5v-1.5l-.22-.22L12 14.56l-1.06-1.06zM6 13.5a2.25 2.25 0 0 1 2.25 2.25h-4.5A2.25 2.25 0 0 1 6 13.5zm3 6a3.33 3.33 0 0 1-3 3 3.33 3.33 0 0 1-3-3v-2.25h6v2.25zm14.76-9.9v1.26L13.5 17.37V15.6l8.5-5.37L9 2v9.46a5.07 5.07 0 0 0-1.5-.72V.63L8.64 0l15.12 9.6z"/></svg>
<div class="t u" style="left:171.5px;top:986.80px;font-size:11.9px;color:#ffffff;">(gdb) 启动 (16)</div>
<div class="t u" style="left:1575.5px;top:986.80px;font-size:11.9px;color:#ffffff;">行 11，列 1</div>
<div class="t u" style="left:1652.5px;top:986.80px;font-size:11.9px;color:#ffffff;">空格: 4</div>
<div class="t u" style="left:1705px;top:986.80px;font-size:11.9px;color:#ffffff;">UTF-8</div>
<div class="t u" style="left:1753.3px;top:986.80px;font-size:11.9px;color:#ffffff;">LF</div>
<div class="t u" style="left:1782px;top:986.80px;font-size:11.9px;color:#ffffff;">C</div>
<div class="t u" style="left:1805.5px;top:986.80px;font-size:11.9px;color:#ffffff;">Linux</div>
<svg class="ic" style="left:1852.00px;top:991.00px;width:14px;height:14px;color:#ffffff;" viewBox="0 0 16 16" fill="currentColor"><g fill="none" stroke="currentColor" stroke-width="1.15" stroke-linejoin="round"><path d="M8.300 2h6.200v5h-2.600l-2.200 2.100v-2.100"/><circle cx="5.600" cy="5.800" r="2.300"/><path d="M1.600 14.600c0-3.300 1.800-5 4-5s4 1.700 4 5"/></g></svg>
<svg class="ic" style="left:1881.30px;top:991.00px;width:14px;height:14px;color:#ffffff;" viewBox="0 0 16 16" fill="currentColor"><path d="M13.377 10.573a7.630 7.630 0 0 1-.383-2.380V6.195a5.115 5.115 0 0 0-1.268-3.446 5.138 5.138 0 0 0-3.242-1.722c-.694-.072-1.400 0-2.070.227-.670.215-1.280.574-1.794 1.053a4.923 4.923 0 0 0-1.208 1.675 5.067 5.067 0 0 0-.431 2.022v2.200a7.610 7.610 0 0 1-.383 2.370L2 12.343l.479.658h3.505c0 .526.215 1.040.586 1.412.370.370.885.587 1.412.587.526 0 1.040-.215 1.411-.587s.587-.886.587-1.412h3.505l.478-.658-.586-1.770zm-4.690 3.147a.997.997 0 0 1-.705.299.997.997 0 0 1-.706-.300.997.997 0 0 1-.300-.705h1.999a.939.939 0 0 1-.287.706zm-5.515-1.710l.371-1.114a8.633 8.633 0 0 0 .443-2.691V6.004c0-.563.120-1.113.347-1.616.227-.514.550-.969.969-1.340.419-.382.910-.670 1.436-.837.526-.180 1.089-.240 1.650-.180a4.147 4.147 0 0 1 2.597 1.400 4.133 4.133 0 0 1 1.004 2.776v2.010c0 .909.144 1.818.443 2.691l.371 1.113h-9.630v-.012z"/><circle cx="12.300" cy="3.200" r="3" /></svg>
</body></html>
